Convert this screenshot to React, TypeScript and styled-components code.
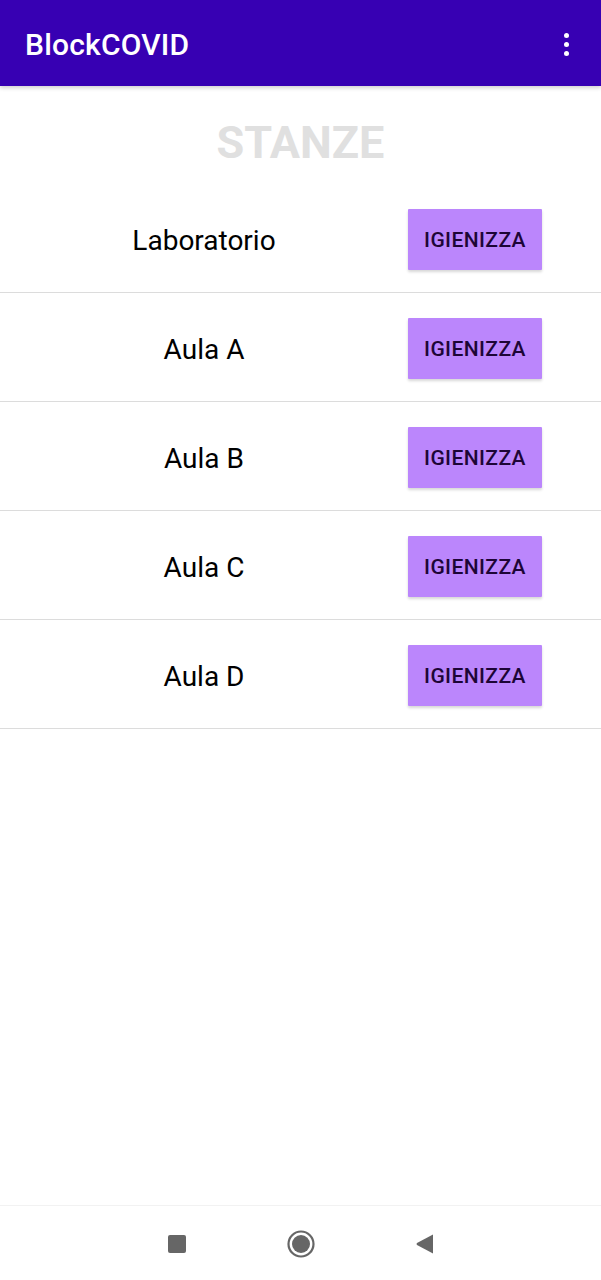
import React from "react";
import styled, { createGlobalStyle } from "styled-components";

const Global = createGlobalStyle`
  html, body { margin: 0; padding: 0; background: #ffffff; }
  body { font-family: Roboto, "Noto Sans", sans-serif; }
`;

const Screen = styled.div`
  width: 601px;
  height: 1280px;
  display: flex;
  flex-direction: column;
  background: #ffffff;
  overflow: hidden;
`;

const AppBar = styled.header`
  height: 86px;
  flex: none;
  background: #3700b3;
  display: flex;
  align-items: center;
  justify-content: space-between;
  padding: 2px 32px 0 25px;
  box-sizing: border-box;
  box-shadow: 0 2px 4px rgba(0, 0, 0, 0.18);
  position: relative;
  z-index: 1;
`;

const Title = styled.h1`
  margin: 0;
  color: #ffffff;
  font-family: Roboto, sans-serif;
  font-weight: 500;
  font-size: 30px;
  letter-spacing: 0.2px;
`;

const MenuDots = styled.div`
  display: flex;
  flex-direction: column;
  gap: 4px;
  span {
    width: 5px;
    height: 5px;
    border-radius: 50%;
    background: #ffffff;
  }
`;

const Content = styled.main`
  flex: 1;
  display: flex;
  flex-direction: column;
`;

const Heading = styled.h2`
  margin: 0;
  height: 98px;
  display: flex;
  align-items: center;
  justify-content: center;
  color: #e0e0e0;
  font-family: Roboto, sans-serif;
  font-weight: 700;
  font-size: 45px;
  padding-top: 14px;
  box-sizing: border-box;
`;

const List = styled.ul`
  list-style: none;
  margin: 0;
  padding: 0;
`;

const Row = styled.li`
  height: 108px;
  display: grid;
  grid-template-columns: 408px 134px;
  align-items: center;
  border-bottom: 1.5px solid #dcdcdc;
`;

const RoomName = styled.span`
  text-align: center;
  font-family: Roboto, sans-serif;
  font-size: 28px;
  color: #000000;
  padding-top: 4px;
`;

const CleanButton = styled.button`
  width: 134px;
  height: 61px;
  margin-top: 2px;
  border: none;
  border-radius: 1px;
  background: #bb86fc;
  color: #1d0536;
  font-family: Roboto, sans-serif;
  font-weight: 500;
  font-size: 21px;
  letter-spacing: 0.4px;
  box-shadow: 0 2px 3px rgba(0, 0, 0, 0.16);
  padding: 2px 0 0;
`;

const NavBar = styled.nav`
  height: 73px;
  flex: none;
  border-top: 1px solid #f2f2f2;
  display: flex;
  align-items: center;
  justify-content: center;
  padding-top: 1px;
`;

const NavSlot = styled.div`
  width: 124px;
  display: flex;
  justify-content: center;
`;

const rooms = ["Laboratorio", "Aula A", "Aula B", "Aula C", "Aula D"];

export default function App() {
  return (
    <>
      <Global />
      <Screen>
        <AppBar>
          <Title>BlockCOVID</Title>
          <MenuDots>
            <span />
            <span />
            <span />
          </MenuDots>
        </AppBar>
        <Content>
          <Heading>STANZE</Heading>
          <List>
            {rooms.map((r) => (
              <Row key={r}>
                <RoomName>{r}</RoomName>
                <CleanButton>IGIENIZZA</CleanButton>
              </Row>
            ))}
          </List>
        </Content>
        <NavBar>
          <NavSlot>
            <svg width="18" height="18" viewBox="0 0 18 18">
              <rect x="0" y="0" width="18" height="18" rx="2" fill="#666" />
            </svg>
          </NavSlot>
          <NavSlot>
            <svg width="28" height="28" viewBox="0 0 28 28">
              <circle cx="14" cy="14" r="12.5" fill="none" stroke="#666" strokeWidth="2.2" />
              <circle cx="14" cy="14" r="9" fill="#666" />
            </svg>
          </NavSlot>
          <NavSlot>
            <svg width="18" height="20" viewBox="0 0 18 20">
              <path d="M17 0.5 L17 19.5 L1 11 Q0 10 1 9 Z" fill="#666" />
            </svg>
          </NavSlot>
        </NavBar>
      </Screen>
    </>
  );
}
